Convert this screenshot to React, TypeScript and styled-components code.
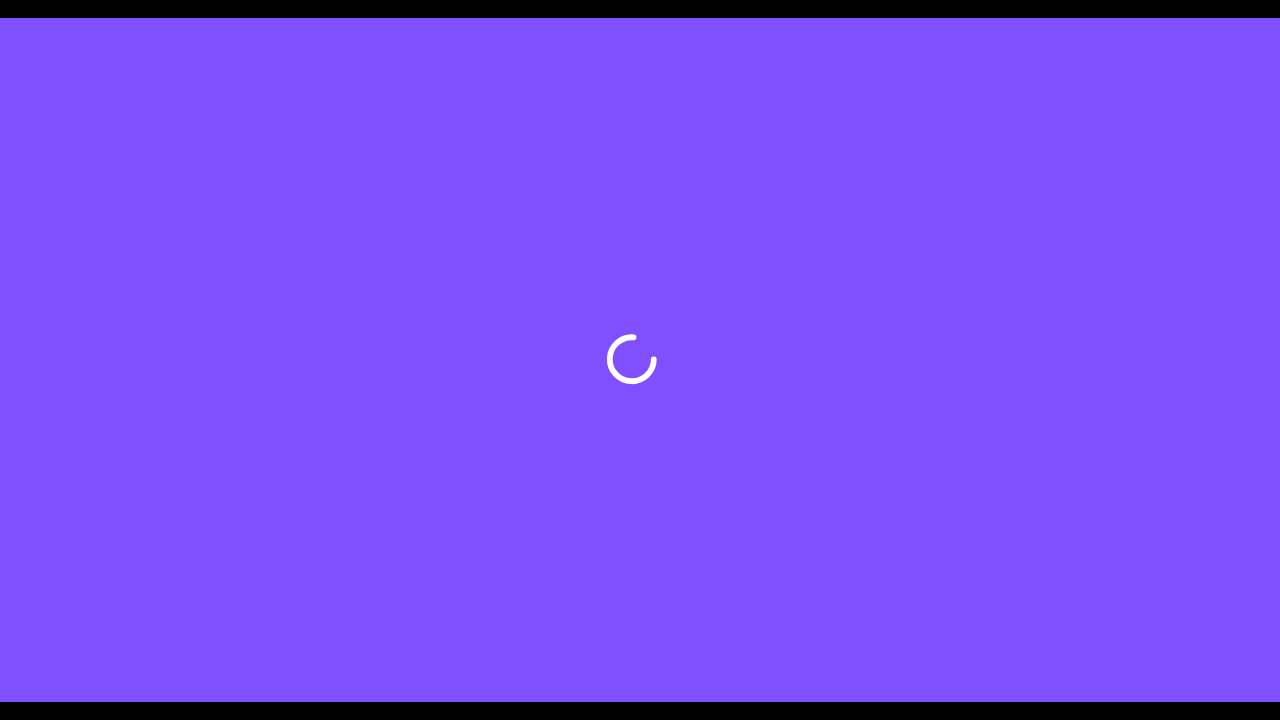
import React from "react";
import styled, { createGlobalStyle } from "styled-components";

const Global = createGlobalStyle`
  html, body { margin: 0; padding: 0; height: 100%; background: #000; overflow: hidden; }
  #root { height: 100%; }
`;

const Page = styled.main`
  height: 720px;
  display: flex;
  align-items: center;
  background: #000;
`;

const Stage = styled.section`
  flex: 1;
  height: 684px;
  padding-right: 16px;
  box-sizing: border-box;
  display: flex;
  align-items: center;
  justify-content: center;
  background: #8050fe;
`;

const Spinner = styled.svg`
  display: block;
  width: 52px;
  height: 52px;
  fill: none;
  stroke: #fff;
  stroke-width: 5.8;
  stroke-linecap: round;
`;

export default function App() {
  return (
    <>
      <Global />
      <Page>
        <Stage>
          <Spinner viewBox="0 0 52 52" aria-label="Loading">
            <path d="M27.5 3.3A22 22 0 1 0 47.8 25.5" />
          </Spinner>
        </Stage>
      </Page>
    </>
  );
}
